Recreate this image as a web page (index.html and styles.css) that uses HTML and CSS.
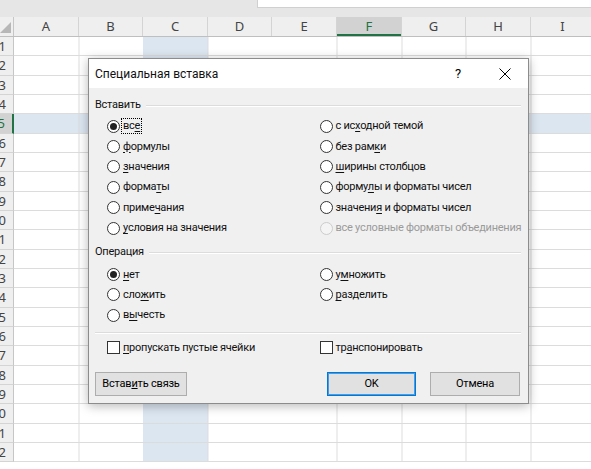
FILE: index.html
```html
<!DOCTYPE html>
<html lang="ru">
<head>
<meta charset="utf-8">
<title>Специальная вставка</title>
<link rel="stylesheet" href="styles.css">
</head>
<body>
<div class="app">
  <div class="topstrip"><div class="fbar"></div></div>
  <div class="sheet">
    <div class="hdr">
      <div class="corner"><span class="tri"></span></div>
      <div class="col">A</div>
      <div class="col">B</div>
      <div class="col">C</div>
      <div class="col">D</div>
      <div class="col">E</div>
      <div class="col sel">F</div>
      <div class="col">G</div>
      <div class="col">H</div>
      <div class="col">I</div>
    </div>
    <div class="row"><div class="rn">1</div><div class="cells"></div></div>
    <div class="row"><div class="rn">2</div><div class="cells"></div></div>
    <div class="row"><div class="rn">3</div><div class="cells"></div></div>
    <div class="row"><div class="rn">4</div><div class="cells"></div></div>
    <div class="row sel"><div class="rn">5</div><div class="cells"></div></div>
    <div class="row"><div class="rn">6</div><div class="cells"></div></div>
    <div class="row"><div class="rn">7</div><div class="cells"></div></div>
    <div class="row"><div class="rn">8</div><div class="cells"></div></div>
    <div class="row"><div class="rn">9</div><div class="cells"></div></div>
    <div class="row"><div class="rn">10</div><div class="cells"></div></div>
    <div class="row"><div class="rn">11</div><div class="cells"></div></div>
    <div class="row"><div class="rn">12</div><div class="cells"></div></div>
    <div class="row"><div class="rn">13</div><div class="cells"></div></div>
    <div class="row"><div class="rn">14</div><div class="cells"></div></div>
    <div class="row"><div class="rn">15</div><div class="cells"></div></div>
    <div class="row"><div class="rn">16</div><div class="cells"></div></div>
    <div class="row"><div class="rn">17</div><div class="cells"></div></div>
    <div class="row"><div class="rn">18</div><div class="cells"></div></div>
    <div class="row"><div class="rn">19</div><div class="cells"></div></div>
    <div class="row"><div class="rn">20</div><div class="cells"></div></div>
    <div class="row"><div class="rn">21</div><div class="cells"></div></div>
    <div class="row"><div class="rn">22</div><div class="cells"></div></div>
  </div>

  <div class="dialog">
    <div class="titlebar">
      <div class="title">Специальная вставка</div>
      <div class="tbtn help">?</div>
      <div class="tbtn close">
        <svg width="12" height="12" viewBox="0 0 12 12"><path d="M0.5 0.5 L11.5 11.5 M11.5 0.5 L0.5 11.5" stroke="#000" stroke-width="1" fill="none"/></svg>
      </div>
    </div>
    <div class="body">
      <div class="glabel"><span>Вставить</span><i class="gline"></i></div>
      <div class="opts">
        <div class="opt"><span class="radio on"></span><span class="txt focus">вс<u>е</u></span></div>
        <div class="opt"><span class="radio"></span><span class="txt">с ис<u>х</u>одной темой</span></div>
        <div class="opt"><span class="radio"></span><span class="txt"><u>ф</u>ормулы</span></div>
        <div class="opt"><span class="radio"></span><span class="txt">без рам<u>к</u>и</span></div>
        <div class="opt"><span class="radio"></span><span class="txt"><u>з</u>начения</span></div>
        <div class="opt"><span class="radio"></span><span class="txt"><u>ш</u>ирины столбцов</span></div>
        <div class="opt"><span class="radio"></span><span class="txt">форма<u>т</u>ы</span></div>
        <div class="opt"><span class="radio"></span><span class="txt">форму<u>л</u>ы и форматы чисел</span></div>
        <div class="opt"><span class="radio"></span><span class="txt">приме<u>ч</u>ания</span></div>
        <div class="opt"><span class="radio"></span><span class="txt">значени<u>я</u> и форматы чисел</span></div>
        <div class="opt"><span class="radio"></span><span class="txt"><u>у</u>словия на значения</span></div>
        <div class="opt disabled"><span class="radio"></span><span class="txt">все условные форматы объединения</span></div>
      </div>
      <div class="glabel op"><span>Операция</span><i class="gline"></i></div>
      <div class="opts ops">
        <div class="opt"><span class="radio on"></span><span class="txt"><u>н</u>ет</span></div>
        <div class="opt"><span class="radio"></span><span class="txt">у<u>м</u>ножить</span></div>
        <div class="opt"><span class="radio"></span><span class="txt">сло<u>ж</u>ить</span></div>
        <div class="opt"><span class="radio"></span><span class="txt"><u>р</u>азделить</span></div>
        <div class="opt"><span class="radio"></span><span class="txt">в<u>ы</u>честь</span></div>
      </div>
      <div class="sep"></div>
      <div class="opts checks">
        <div class="opt"><span class="check"></span><span class="txt"><u>п</u>ропускать пустые ячейки</span></div>
        <div class="opt"><span class="check"></span><span class="txt">тр<u>а</u>нспонировать</span></div>
      </div>
      <div class="buttons">
        <button class="btn link">Встав<u>и</u>ть связь</button>
        <span class="spacer"></span>
        <button class="btn ok">OK</button>
        <button class="btn cancel">Отмена</button>
      </div>
    </div>
  </div>
</div>
</body>
</html>
```

FILE: styles.css
```css
* { box-sizing: border-box; }
html, body { margin: 0; padding: 0; }
body {
  width: 591px;
  height: 469px;
  overflow: hidden;
  background: #ffffff;
  font-family: Roboto, "Noto Sans", sans-serif;
}
.app {
  position: relative;
  width: 591px;
  height: 469px;
  overflow: hidden;
}

/* ---------- spreadsheet ---------- */
.topstrip {
  height: 17px;
  background: #e6e6e6;
}
.fbar {
  margin-left: 257px;
  height: 8px;
  background: #ffffff;
  border-left: 1px solid #d0d0d0;
  border-bottom: 1px solid #d0d0d0;
}
.sheet {
  --cw: 64.6px;
}
.hdr {
  display: flex;
  height: 20px;
  background: #efefef;
  border-bottom: 1px solid #bfbfbf;
}
.corner {
  width: 14px;
  flex: none;
  position: relative;
  border-right: 1px solid #c6c6c6;
}
.tri {
  position: absolute;
  right: 2px;
  bottom: 3px;
  width: 0;
  height: 0;
  border-left: 11px solid transparent;
  border-bottom: 11px solid #b7b7b7;
}
.col {
  width: var(--cw);
  flex: none;
  text-align: center;
  font-family: "Noto Sans", sans-serif;
  font-size: 13px;
  line-height: 19px;
  color: #444;
  border-right: 1px solid #d4d4d4;
}
.col.sel {
  background: #d2d2d2;
  color: #217346;
  box-shadow: inset 0 -2px 0 #217346;
}
.row {
  display: flex;
  height: 19.33px;
}
.rn {
  width: 14px;
  flex: none;
  background: #efefef;
  border-right: 1px solid #c6c6c6;
  border-bottom: 1px solid #d4d4d4;
  font-family: "Noto Sans", sans-serif;
  font-size: 13px;
  line-height: 18px;
  color: #444;
  text-align: right;
  padding-right: 7px;
  white-space: nowrap;
  overflow: hidden;
  direction: rtl;
}
.row.sel .rn {
  background: #d2d2d2;
  color: #217346;
  border-right: 2px solid #217346;
}
.cells {
  flex: 1;
  border-bottom: 1px solid #dcdcdc;
  background-image:
    repeating-linear-gradient(90deg, transparent 0, transparent 63.9px, #dcdcdc 63.9px, #dcdcdc 64.6px),
    linear-gradient(90deg, transparent 0, transparent 129.2px, #dce6f1 129.2px, #dce6f1 193.8px, transparent 193.8px);
  background-position: 0.5px 0, 0 0;
}
.row.sel .cells {
  background-color: #dce6f1;
}

/* ---------- dialog ---------- */
.dialog {
  position: absolute;
  left: 88px;
  top: 58px;
  width: 441px;
  height: 346px;
  border: 1px solid #8c8c8c;
  background: #f0f0f0;
  box-shadow: 0 2px 10px rgba(0, 0, 0, 0.28);
  color: #000;
}
.titlebar {
  height: 29px;
  background: #ffffff;
  display: flex;
  align-items: center;
  padding-left: 6px;
}
.title {
  flex: 1;
  font-size: 12px;
  line-height: 16px;
  padding-top: 1px;
  color: #111;
}
.tbtn {
  display: flex;
  align-items: center;
  justify-content: center;
}
.help {
  font-size: 13px;
  width: 14px;
  margin-right: 34px;
}
.close {
  width: 12px;
  margin-right: 17px;
}
.close svg { display: block; }

.body {
  padding: 7px 7px 0 6px;
  font-size: 11px;
  letter-spacing: -0.25px;
  color: #111;
}
.glabel {
  display: flex;
  align-items: center;
  height: 16px;
  line-height: 16px;
  margin-top: 2px;
}
.gline {
  flex: 1;
  margin-left: 5px;
  height: 2px;
  border-top: 1px solid #dcdcdc;
  border-bottom: 1px solid #ffffff;
  margin-top: 1px;
}
.glabel.op { margin-top: 6px; }
.opts {
  display: grid;
  grid-template-columns: 212.5px 1fr;
  grid-auto-rows: 20.4px;
  padding-left: 12px;
  margin-top: 3px;
}
.opts.ops { margin-top: 4px; }
.opt {
  display: flex;
  align-items: center;
  white-space: nowrap;
}
.txt {
  margin-left: 3px;
  line-height: 14px;
}
.txt u { text-underline-offset: 2px; }
.focus {
  outline: 1px dotted #000;
  outline-offset: 0;
  padding: 0 1px;
  margin-left: 2px;
}
.radio {
  width: 13px;
  height: 13px;
  flex: none;
  border: 1px solid #333;
  border-radius: 50%;
  background: #fff;
  position: relative;
}
.radio.on::after {
  content: "";
  position: absolute;
  left: 2px;
  top: 2px;
  width: 7px;
  height: 7px;
  border-radius: 50%;
  background: #222;
}
.opt.disabled .radio { border-color: #cccccc; background: #f4f4f4; }
.opt.disabled .txt { color: #9a9a9a; }
.check {
  width: 13px;
  height: 13px;
  flex: none;
  border: 1px solid #333;
  background: #fff;
}
.sep {
  margin-top: 6px;
  height: 2px;
  border-top: 1px solid #dcdcdc;
  border-bottom: 1px solid #ffffff;
}
.checks {
  margin-top: 4px;
}
.buttons {
  display: flex;
  margin-top: 14px;
  margin-right: 1px;
}
.spacer { flex: 1; }
.btn {
  height: 24px;
  font-family: inherit;
  font-size: 11px;
  letter-spacing: -0.2px;
  color: #000;
  background: #e1e1e1;
  border: 1px solid #adadad;
  padding: 0;
  margin: 0;
}
.btn.link { width: 92px; }
.btn.ok {
  width: 89px;
  border-color: #0078d7;
  box-shadow: inset 0 0 0 1px #4a9be0;
}
.btn.cancel { width: 90px; margin-left: 14px; }
```
